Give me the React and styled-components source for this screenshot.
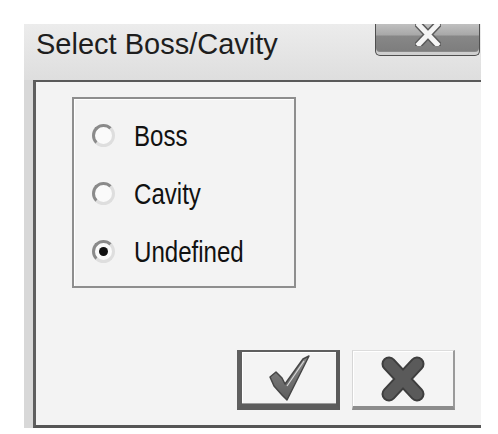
/* --- Packages --- */
import React, { useState } from 'react';
import styled, { createGlobalStyle } from 'styled-components';

/* --- Styles --- */
const GlobalStyle = createGlobalStyle`
  html, body {
    margin: 0;
    padding: 0;
    background: #ffffff;
  }
`;

const Page = styled.div`
  padding: 24px 0 0 24px;
  font-family: 'Liberation Sans', Arial, sans-serif;
`;

const Window = styled.div`
  display: flex;
  flex-direction: column;
  width: 457px;
  height: 404px;
  background: #e4e4e4;
`;

const TitleBar = styled.div`
  display: flex;
  justify-content: space-between;
  align-items: flex-start;
  height: 56px;
  background: linear-gradient(#ececec, #dedede);
`;

const Title = styled.div`
  padding: 3px 0 0 12px;
  font-size: 29px;
  line-height: 34px;
  color: #1e1e1e;
`;

const CloseButton = styled.div`
  display: flex;
  justify-content: center;
  align-items: flex-start;
  width: 105px;
  height: 32px;
  margin-right: 1px;
  box-sizing: border-box;
  border: 1px solid #4f4f4f;
  border-top: none;
  border-radius: 0 0 5px 5px;
  background: linear-gradient(#c0c0c0 0%, #a9a9a9 34%, #878787 40%, #7b7b7b 100%);
  box-shadow: inset 0 -3px 0 #cfcfcf, inset 0 -4px 0 #8a8a8a;
`;

const Body = styled.div`
  display: flex;
  flex: 1;
`;

const FrameEdge = styled.div`
  width: 9px;
  background: #d8d8d8;
`;

const Panel = styled.div`
  flex: 1;
  display: flex;
  flex-direction: column;
  padding: 15px 0 15px 36px;
  border-top: 2px solid #5a5a5a;
  border-left: 3px solid #5e5e5e;
  border-bottom: 3px solid #555555;
  background: #f3f3f3;
`;

const GroupBox = styled.div`
  box-sizing: border-box;
  width: 224px;
  height: 191px;
  padding: 7px 0 0 18px;
  border: 2px solid #8e8e8e;
  box-shadow: inset 1px 1px 0 #ffffff;
`;

const RadioRow = styled.label`
  display: flex;
  align-items: center;
  height: 58px;
  cursor: default;
`;

const RadioCircle = styled.span`
  position: relative;
  box-sizing: border-box;
  width: 23px;
  height: 23px;
  border-radius: 50%;
  border: 3px solid;
  border-color: #8a8a8a #dedede #dedede #8a8a8a;
  background: #fafafa;

  &::after {
    content: '';
    display: ${props => (props.checked ? 'block' : 'none')};
    position: absolute;
    left: 4px;
    top: 4px;
    width: 9px;
    height: 9px;
    border-radius: 50%;
    background: #111111;
  }
`;

const RadioLabel = styled.span`
  display: inline-block;
  margin: 3px 0 0 19px;
  font-size: 29px;
  line-height: 1;
  color: #111111;
  transform: scaleX(0.83);
  transform-origin: left center;
  white-space: nowrap;
`;

const ButtonRow = styled.div`
  display: flex;
  justify-content: flex-end;
  gap: 12px;
  margin-top: auto;
  padding-right: 26px;
`;

const DialogButton = styled.button`
  display: flex;
  justify-content: center;
  align-items: center;
  box-sizing: border-box;
  width: 103px;
  height: 60px;
  padding: 0;
  background: #f4f4f4;
  border-style: solid;
  border-color: ${props =>
    props.primary
      ? '#5f5f5f #5a5a5a #5c5c5c #5f5f5f'
      : '#dcdcdc #9a9a9a #8c8c8c #d6d6d6'};
  border-width: ${props => (props.primary ? '2px 4px 6px 5px' : '1px 2px 4px 1px')};
  box-shadow: ${props =>
    props.primary ? 'inset 0 -1px 0 #9b9b9b, inset 1px 1px 0 #ffffff' : 'inset 1px 1px 0 #ffffff'};
`;

/* --- Icons --- */
const CloseGlyph = () => (
  <svg width="26" height="22" viewBox="0 0 26 22">
    <path d="M4 1 L22 20 M22 1 L4 20" stroke="#5a5a5a" strokeWidth="8" strokeLinecap="square" />
    <path d="M4 1 L22 20 M22 1 L4 20" stroke="#f4f4f4" strokeWidth="5" strokeLinecap="square" />
  </svg>
);

const CheckIcon = () => (
  <svg width="46" height="50" viewBox="0 0 46 50">
    <defs>
      <linearGradient id="checkFill" x1="0" y1="0" x2="0" y2="1">
        <stop offset="0" stopColor="#8a8a8a" />
        <stop offset="1" stopColor="#5c5c5c" />
      </linearGradient>
    </defs>
    <path
      d="M4 24 L10 19 L16 25 L19 31 L37 6 L43 3 L32 25 L21 47 L16 42 L8 33 Z"
      fill="url(#checkFill)"
      stroke="#464646"
      strokeWidth="1.5"
      strokeLinejoin="round"
    />
    <path d="M21 33 L38 8" stroke="#d8d8d8" strokeWidth="1.2" />
  </svg>
);

const CrossIcon = () => (
  <svg width="44" height="46" viewBox="0 0 44 46">
    <path d="M8 8 L36 38 M36 8 L8 38" stroke="#3e3e3e" strokeWidth="15" strokeLinecap="round" />
    <path d="M8 8 L36 38 M36 8 L8 38" stroke="#5a5a5a" strokeWidth="11" strokeLinecap="round" />
  </svg>
);

/* --- Component --- */
const OPTIONS = ['Boss', 'Cavity', 'Undefined'];

const App = () => {
  const [choice, setChoice] = useState('Undefined');

  return (
    <Page>
      <GlobalStyle />
      <Window>
        <TitleBar>
          <Title>Select Boss/Cavity</Title>
          <CloseButton>
            <CloseGlyph />
          </CloseButton>
        </TitleBar>
        <Body>
          <FrameEdge />
          <Panel>
            <GroupBox>
              {OPTIONS.map(option => (
                <RadioRow key={option} onClick={() => setChoice(option)}>
                  <RadioCircle checked={choice === option} />
                  <RadioLabel>{option}</RadioLabel>
                </RadioRow>
              ))}
            </GroupBox>
            <ButtonRow>
              <DialogButton primary>
                <CheckIcon />
              </DialogButton>
              <DialogButton>
                <CrossIcon />
              </DialogButton>
            </ButtonRow>
          </Panel>
        </Body>
      </Window>
    </Page>
  );
};

export default App;
